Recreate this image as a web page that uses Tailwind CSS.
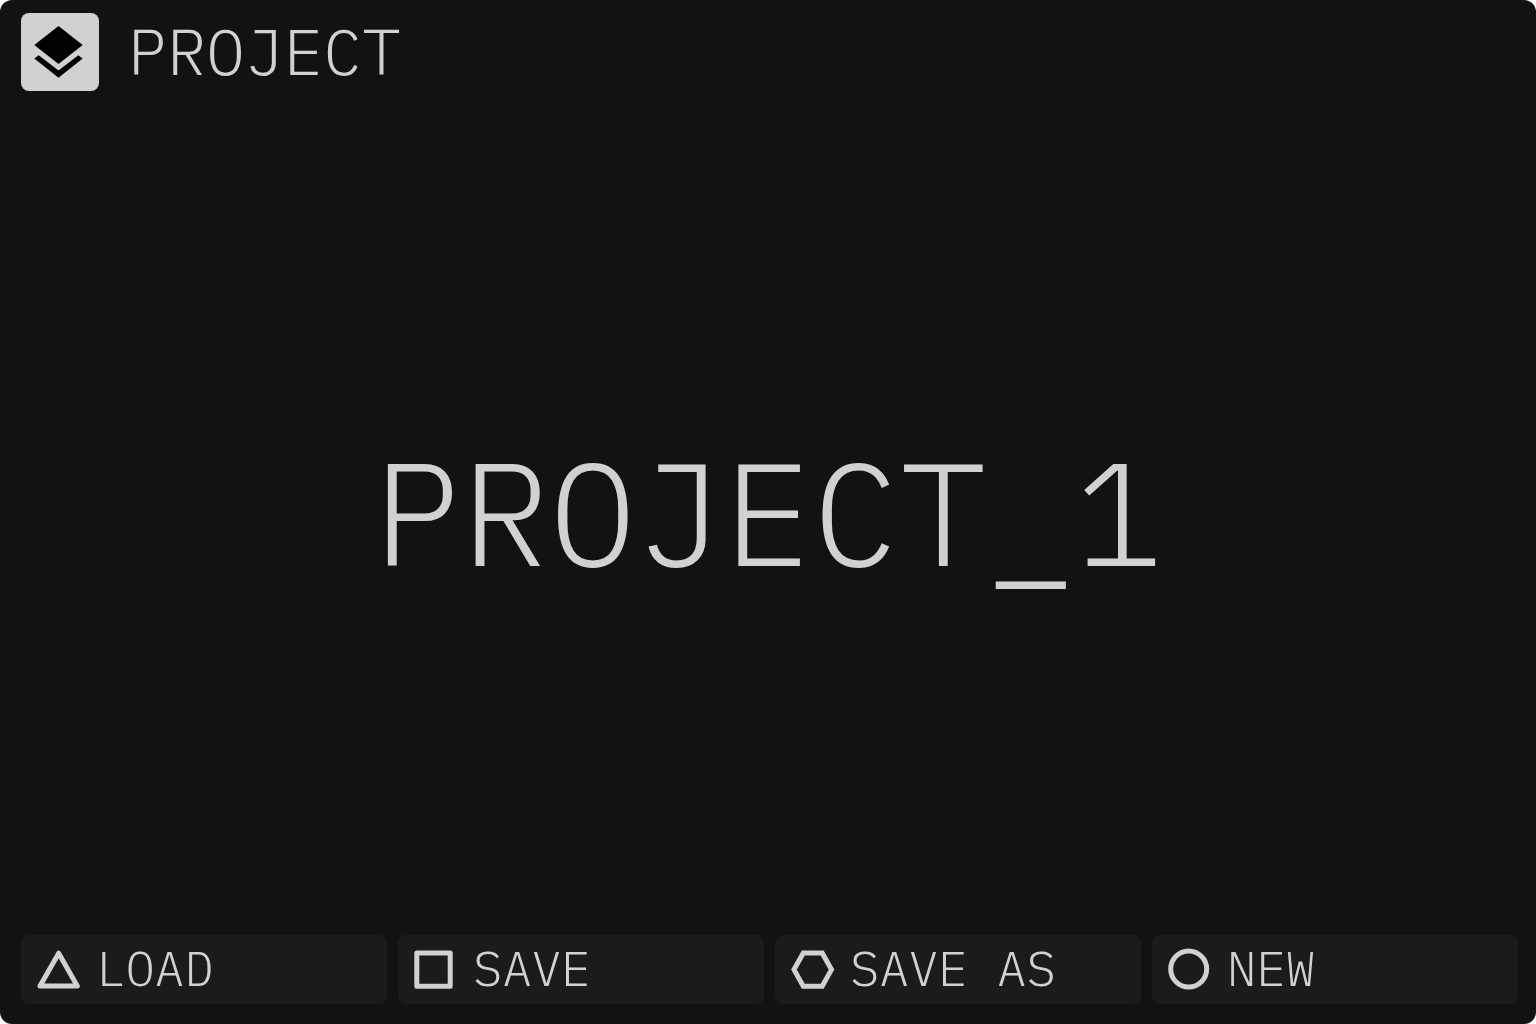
<!DOCTYPE html>
<html lang="en">
  <head>
    <meta charset="UTF-8" />
    <meta name="viewport" content="width=device-width, initial-scale=1.0" />
    <title>Project</title>
    <script src="https://cdn.jsdelivr.net/npm/@tailwindcss/browser@4"></script>
  </head>
  <body class="bg-white">
    <div
      class="flex min-h-screen flex-col rounded-xl bg-[#121212] pt-[13px] pr-[18px] pb-5 pl-[21px] font-['IBM_Plex_Mono','Liberation_Mono',monospace] font-light text-[#d1d1d1]"
    >
      <!-- Header -->
      <header class="flex items-center gap-[29px]">
        <div class="size-[78px] shrink-0 rounded-lg bg-[#d1d1d1]">
          <svg class="size-full" viewBox="0 0 78 78" fill="#000" aria-hidden="true">
            <path d="M37.5 13 61.7 32 37.5 51 13.3 32Z" />
            <path d="M13.3 45.6 17.7 42.2 37.5 57.6 57.3 42.2 61.7 45.6 37.5 64.7Z" />
          </svg>
        </div>
        <h1 class="pb-1 text-[65px] leading-none">PROJECT</h1>
      </header>

      <!-- Current project -->
      <main class="flex flex-1 items-center justify-center">
        <h2 class="pr-[3px] pb-1 text-[146px] leading-none">PROJECT_1</h2>
      </main>

      <!-- Actions -->
      <footer class="grid grid-cols-4 gap-[11px] text-[49px] leading-none">
        <button type="button" class="flex h-[69px] items-center gap-[15px] rounded-lg bg-[#1b1b1b] px-4">
          <svg class="size-11 shrink-0" viewBox="0 0 44 44" fill="none" stroke="currentColor" stroke-width="5" stroke-linejoin="round" aria-hidden="true">
            <path d="M21.7 5.2 40.3 38H3Z" />
          </svg>
          <span class="pb-1">LOAD</span>
        </button>
        <button type="button" class="flex h-[69px] items-center gap-[15px] rounded-lg bg-[#1b1b1b] px-4">
          <svg class="size-11 shrink-0" viewBox="0 0 44 44" fill="none" stroke="currentColor" stroke-width="5" stroke-linejoin="round" aria-hidden="true">
            <path d="M2.8 5H36.2V38.2H2.8Z" />
          </svg>
          <span class="pb-1">SAVE</span>
        </button>
        <button type="button" class="flex h-[69px] items-center gap-[15px] rounded-lg bg-[#1b1b1b] px-4">
          <svg class="size-11 shrink-0" viewBox="0 0 44 44" fill="none" stroke="currentColor" stroke-width="5" aria-hidden="true">
            <path d="M12.3 5H31.2L40.5 21.6 31.2 38.2H12.3L3 21.6Z" />
          </svg>
          <span class="pb-1">SAVE AS</span>
        </button>
        <button type="button" class="flex h-[69px] items-center gap-[15px] rounded-lg bg-[#1b1b1b] px-4">
          <svg class="size-11 shrink-0" viewBox="0 0 44 44" fill="none" stroke="currentColor" stroke-width="5" aria-hidden="true">
            <circle cx="20.7" cy="21" r="18" />
          </svg>
          <span class="pb-1">NEW</span>
        </button>
      </footer>
    </div>
  </body>
</html>
